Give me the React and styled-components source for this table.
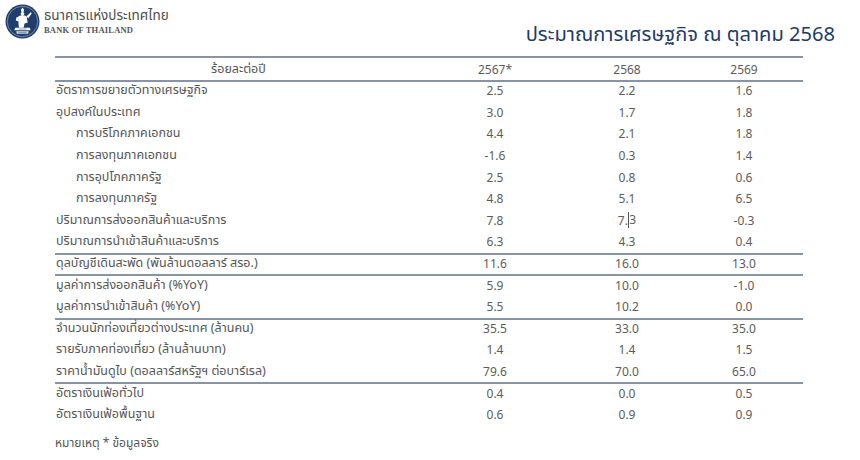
import React from "react";
import styled, { createGlobalStyle } from "styled-components";

const GlobalStyle = createGlobalStyle`
  html, body {
    margin: 0;
    padding: 0;
    background: #ffffff;
  }
  body {
    font-family: "Noto Sans Thai", "Noto Sans", "DejaVu Sans", sans-serif;
  }
`;

const Page = styled.div`
  width: 860px;
  height: 460px;
  background: #fff;
  overflow: hidden;
  display: flex;
  flex-direction: column;
`;

const Header = styled.div`
  display: flex;
  justify-content: space-between;
  align-items: flex-start;
  padding: 4px 25px 0 5px;
  height: 52px;
  box-sizing: border-box;
`;

const Brand = styled.div`
  display: flex;
  align-items: center;
  gap: 4px;
`;

const BrandText = styled.div`
  display: flex;
  flex-direction: column;
`;

const BrandThai = styled.div`
  font-size: 13.5px;
  color: #4d4d4d;
  line-height: 17px;
`;

const BrandEng = styled.div`
  font-family: "Liberation Serif", serif;
  font-size: 8.5px;
  font-weight: bold;
  color: #555;
  letter-spacing: 0.2px;
  line-height: 10px;
`;

const Title = styled.h1`
  margin: 16px 0 0;
  font-size: 20.1px;
  font-weight: normal;
  color: #1d3a6b;
  line-height: 30px;
`;

const Table = styled.div`
  margin: 4px 0 0 55px;
  width: 748px;
  display: grid;
  grid-template-columns: 366px 148px 116px 118px;
  border-top: 2px solid #8793a6;
`;

const Row = styled.div`
  display: contents;
  & > div {
    height: ${(p) => (p.$head ? "22px" : "21.6px")};
    border-bottom: ${(p) => (p.$line ? "2px solid #8793a6" : "none")};
    box-sizing: ${(p) => (p.$line ? "content-box" : "border-box")};
    margin-bottom: ${(p) => (p.$line ? "-2px" : "0")};
  }
`;

const Label = styled.div`
  display: flex;
  align-items: center;
  justify-content: ${(p) => (p.$center ? "center" : "flex-start")};
  padding-left: ${(p) => (p.$indent ? "21px" : "1px")};
  font-size: 12.5px;
  color: #555;
  white-space: nowrap;
`;

const Value = styled.div`
  display: flex;
  align-items: center;
  justify-content: center;
  font-family: "Noto Sans", "DejaVu Sans", sans-serif;
  font-size: 12px;
  color: #5c5c5c;
`;

const Caret = styled.span`
  display: inline-block;
  border-left: 1px solid #555;
  height: 16px;
  line-height: 16px;
  margin-left: 0.5px;
`;

const Note = styled.div`
  margin: 8px 0 0 55px;
  font-size: 12px;
  color: #555;
`;

const Logo = () => (
  <svg width="35" height="35" viewBox="0 0 34 34">
    <circle cx="17" cy="17" r="16.5" fill="#1f3e6d" />
    <circle cx="17" cy="17" r="14.8" fill="none" stroke="#a9b7cc" strokeWidth="0.6" />
    <g fill="#fff">
      <path d="M15.5 5.5 L17 3.5 L18.5 5.5 L18 8 L16 8 Z" />
      <circle cx="17" cy="9.5" r="1.8" />
      <path d="M13 12 Q17 10 21 12 L22 18 L19 19 L18 23 L13.5 23 L13 18 Z" />
      <path d="M21 12 L25 8 L26 9 L22.5 14 Z" />
      <path d="M11 13 L13.5 12.5 L13 17 L10.5 16 Z" />
      <path d="M10 23 L24 23 L25 25.5 L9 25.5 Z" />
      <path d="M11 26.5 L23 26.5 L22.5 29 L11.5 29 Z" opacity="0.85" />
    </g>
    <g stroke="#1f3e6d" strokeWidth="0.5">
      <line x1="13" y1="24.3" x2="21" y2="24.3" />
      <line x1="13" y1="27.8" x2="21" y2="27.8" />
    </g>
  </svg>
);

const rows = [
  { label: "อัตราการขยายตัวทางเศรษฐกิจ", v: ["2.5", "2.2", "1.6"] },
  { label: "อุปสงค์ในประเทศ", v: ["3.0", "1.7", "1.8"] },
  { label: "การบริโภคภาคเอกชน", v: ["4.4", "2.1", "1.8"], indent: true },
  { label: "การลงทุนภาคเอกชน", v: ["-1.6", "0.3", "1.4"], indent: true },
  { label: "การอุปโภคภาครัฐ", v: ["2.5", "0.8", "0.6"], indent: true },
  { label: "การลงทุนภาครัฐ", v: ["4.8", "5.1", "6.5"], indent: true },
  { label: "ปริมาณการส่งออกสินค้าและบริการ", v: ["7.8", "caret", "-0.3"] },
  { label: "ปริมาณการนำเข้าสินค้าและบริการ", v: ["6.3", "4.3", "0.4"], line: true },
  { label: "ดุลบัญชีเดินสะพัด (พันล้านดอลลาร์ สรอ.)", v: ["11.6", "16.0", "13.0"], line: true },
  { label: "มูลค่าการส่งออกสินค้า (%YoY)", v: ["5.9", "10.0", "-1.0"] },
  { label: "มูลค่าการนำเข้าสินค้า (%YoY)", v: ["5.5", "10.2", "0.0"], line: true },
  { label: "จำนวนนักท่องเที่ยวต่างประเทศ (ล้านคน)", v: ["35.5", "33.0", "35.0"] },
  { label: "รายรับภาคท่องเที่ยว (ล้านล้านบาท)", v: ["1.4", "1.4", "1.5"] },
  { label: "ราคาน้ำมันดูไบ (ดอลลาร์สหรัฐฯ ต่อบาร์เรล)", v: ["79.6", "70.0", "65.0"], line: true },
  { label: "อัตราเงินเฟ้อทั่วไป", v: ["0.4", "0.0", "0.5"] },
  { label: "อัตราเงินเฟ้อพื้นฐาน", v: ["0.6", "0.9", "0.9"] },
];

export default function App() {
  return (
    <Page>
      <GlobalStyle />
      <Header>
        <Brand>
          <Logo />
          <BrandText>
            <BrandThai>ธนาคารแห่งประเทศไทย</BrandThai>
            <BrandEng>BANK OF THAILAND</BrandEng>
          </BrandText>
        </Brand>
        <Title>ประมาณการเศรษฐกิจ ณ ตุลาคม 2568</Title>
      </Header>
      <Table>
        <Row $head $line>
          <Label $center>ร้อยละต่อปี</Label>
          <Value>2567*</Value>
          <Value>2568</Value>
          <Value>2569</Value>
        </Row>
        {rows.map((r) => (
          <Row key={r.label} $line={r.line}>
            <Label $indent={r.indent}>{r.label}</Label>
            {r.v.map((x, i) => (
              <Value key={i}>
                {x === "caret" ? (
                  <>
                    7.<Caret>3</Caret>
                  </>
                ) : (
                  x
                )}
              </Value>
            ))}
          </Row>
        ))}
      </Table>
      <Note>หมายเหตุ * ข้อมูลจริง</Note>
    </Page>
  );
}
